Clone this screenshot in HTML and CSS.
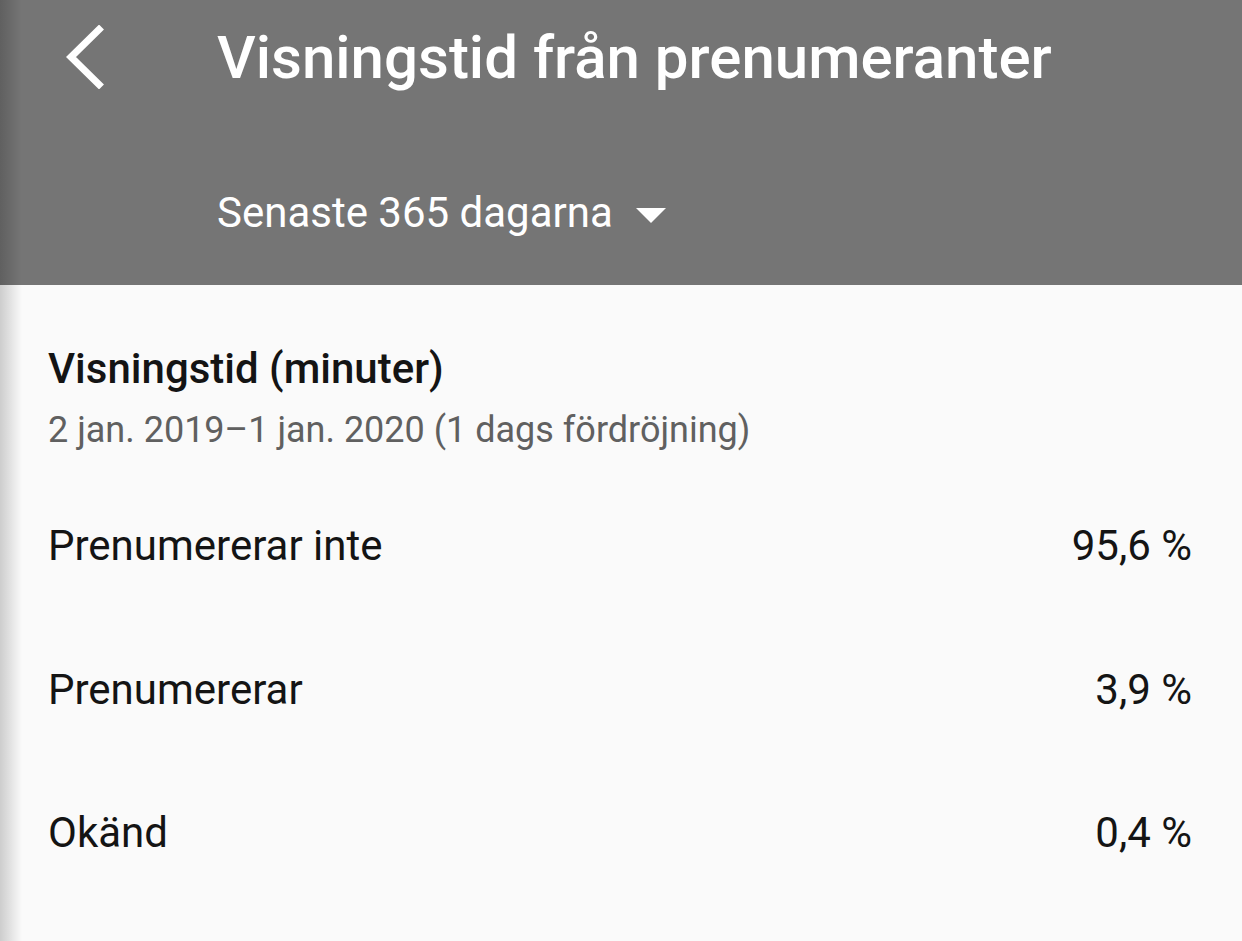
FILE: index.html
```html
<!DOCTYPE html>
<html lang="sv">
<head>
<meta charset="utf-8">
<title>Visningstid från prenumeranter</title>
<link rel="stylesheet" href="styles.css">
</head>
<body>
<div class="screen">
  <header class="appbar">
    <div class="appbar-top">
      <button class="back" aria-label="Tillbaka">
        <svg width="44" height="64" viewBox="0 0 44 64"><path d="M37 4.5 L9 32 L37 59.5" fill="none" stroke="#fff" stroke-width="7" stroke-linecap="square"/></svg>
      </button>
      <h1 class="title">Visningstid från prenumeranter</h1>
    </div>
    <div class="range">
      <span class="range-label">Senaste 365 dagarna</span>
      <svg class="caret" width="30" height="15" viewBox="0 0 30 15"><path d="M0 0 H30 L15 15 Z" fill="#fff"/></svg>
    </div>
  </header>
  <main class="content">
    <h2 class="card-title">Visningstid (minuter)</h2>
    <div class="card-sub">2 jan. 2019–1 jan. 2020 (1 dags fördröjning)</div>
    <ul class="rows">
      <li class="row"><span>Prenumererar inte</span><span>95,6 %</span></li>
      <li class="row"><span>Prenumererar</span><span>3,9 %</span></li>
      <li class="row"><span>Okänd</span><span>0,4 %</span></li>
    </ul>
  </main>
  <div class="edge-shadow"></div>
</div>
</body>
</html>
```
FILE: styles.css
```css
* { box-sizing: border-box; }
html, body { margin: 0; padding: 0; }
body {
  width: 1242px;
  height: 941px;
  overflow: hidden;
  background: #fafafa;
  font-family: Roboto, "Noto Sans", sans-serif;
}
.screen {
  position: relative;
  width: 1242px;
  height: 941px;
  display: flex;
  flex-direction: column;
}
.appbar {
  background: #757575;
  height: 285px;
  flex: none;
  color: #fff;
}
.appbar-top {
  display: flex;
  align-items: center;
  height: 116px;
}
.back {
  background: none;
  border: 0;
  padding: 0;
  margin-left: 62px;
  width: 44px;
  height: 64px;
  display: flex;
  margin-top: -2px;
}
.title {
  margin: 0 0 0 111px;
  font-size: 60px;
  font-weight: 500;
  line-height: 70px;
  letter-spacing: 0;
}
.range {
  display: flex;
  align-items: center;
  margin-left: 217px;
  margin-top: 72px;
  gap: 23px;
}
.range-label {
  font-size: 42px;
  line-height: 50px;
}
.caret { margin-top: 4px; }
.content {
  flex: 1;
  padding: 59px 50px 0 48px;
}
.card-title {
  margin: 0;
  font-size: 42px;
  font-weight: 500;
  line-height: 50px;
  color: #141414;
}
.card-sub {
  margin-top: 14px;
  font-size: 36px;
  line-height: 44px;
  color: #606060;
}
.rows {
  list-style: none;
  margin: 69px 0 0;
  padding: 0;
}
.row {
  display: flex;
  justify-content: space-between;
  font-size: 42px;
  line-height: 50px;
  height: 143.5px;
  color: #141414;
}
.edge-shadow {
  position: absolute;
  left: 0;
  top: 0;
  width: 22px;
  height: 100%;
  background: linear-gradient(to right, rgba(0,0,0,0.18), rgba(0,0,0,0));
  pointer-events: none;
}
```
